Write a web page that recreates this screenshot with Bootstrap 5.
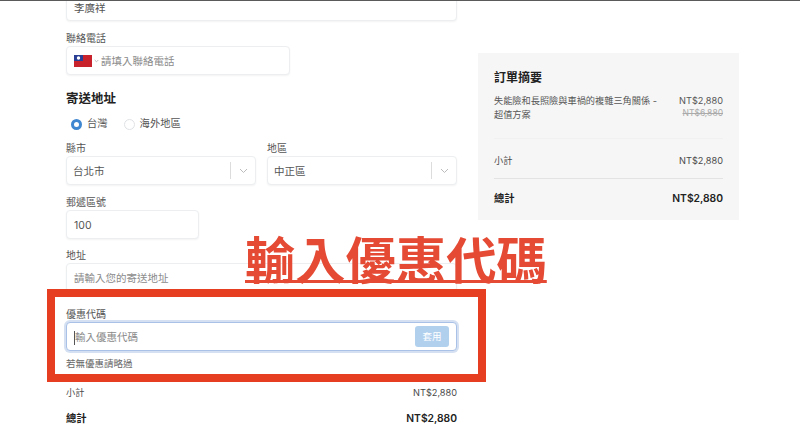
<!DOCTYPE html>
<html lang="zh-Hant">
<head>
<meta charset="utf-8">
<title>結帳</title>
<link href="https://cdn.jsdelivr.net/npm/bootstrap@5.3.0/dist/css/bootstrap.min.css" rel="stylesheet">
<style>
html,body{height:436px;overflow:hidden;background:#fff}
body{font-family:Inter,"Noto Sans CJK TC",sans-serif;font-size:11px;color:#4a4a4a;position:relative}
.topline{height:1px;background:#5a5a5a;position:relative;z-index:2}
.pagewrap{padding-left:66px;width:739px;align-items:flex-start;gap:21px}
.leftcol{width:391px;flex:none;margin-top:-9px}
.field{display:block;height:29px;line-height:30px;border:1px solid #eceef0;border-radius:4px;background:#fff;box-shadow:0 1px 2px rgba(0,0,0,.05);padding:0 7px;font-size:10.5px;color:#555}
.firstfield{line-height:31px}
.ph{color:#8b8b8b}
.nudge{margin-top:2px}
.lab{display:block;font-size:10px;line-height:14px;color:#555;margin:0 0 1px}
.phone{width:224px;gap:2px;display:flex;align-items:center}
.secthead{font-size:12.5px;font-weight:600;color:#222;line-height:18px;margin:15px 0 0}
.radios{height:22px;margin:5px 0 0 5px;gap:16px}
.radiodot{width:11px;height:11px;border-radius:50%;border:1px solid #dfe2e5;background:#fff;flex:none}
.radiodot.on{border:3px solid #3f87d0}
.radioitem{gap:5px;font-size:10.3px;color:#555}
.selbox{display:flex;align-items:center;justify-content:space-between;padding-right:0;padding-left:6px}
.selend{width:25px;height:17px;border-left:1px solid #dcdcdc;display:flex;align-items:center;justify-content:center}
.zip{width:133px}
.focusbox{border-color:#a9c1e6;box-shadow:0 0 0 2px #d5e1f2;display:flex;align-items:center;justify-content:space-between;padding:0 7px}
.caret{border-left:1px solid #555;height:14px;display:inline-block;vertical-align:middle}
.applybtn{background:#b1d0ee;color:#fff;font-size:9.5px;border:0;border-radius:3px;height:21px;width:34px;padding:0;line-height:21px}
.helptext{font-size:9.5px;color:#666;line-height:14px}
.rowline{display:flex;justify-content:space-between;align-items:center}
.sumline{font-size:9.2px;line-height:14px}
.strongline{font-weight:600;color:#222;font-size:10.3px;line-height:14px}
.panel{width:261px;flex:none;height:167px;margin-top:52px;background:#f6f6f6;padding:17px 16px 0}
.panel h2{font-size:12px;font-weight:600;color:#222;line-height:16px;margin:0 0 8px}
.itemtext{width:170px;font-size:9.2px;line-height:14px;color:#555}
.price{font-size:9.2px;line-height:13px;text-align:right;color:#555}
.oldprice{color:#aaa;text-decoration:line-through;font-size:8.5px}
.rule1{border-top:1px solid #f1f1f1;margin:16px 0 15px}
.rule2{border-top:1px solid #e3e3e3;margin:10px 0 12px}
.bigred{position:absolute;left:245px;top:228px;font-size:50.3px;line-height:58px;font-weight:700;color:#e54a35;text-decoration:underline;text-decoration-thickness:3px;text-underline-offset:1px;white-space:nowrap;font-family:"Noto Sans CJK TC",sans-serif}
.redbox{position:absolute;left:47px;top:289px;width:439px;height:93px;border:8px solid #e63e20;pointer-events:none}
</style>
</head>
<body>
<div class="topline"></div>
<div class="d-flex pagewrap">
  <div class="leftcol">
    <div class="field firstfield">李廣祥</div>

    <label class="lab" style="margin-top:10px">聯絡電話</label>
    <div class="field phone">
      <svg width="18" height="12" viewBox="0 0 18 12" aria-hidden="true"><rect width="18" height="12" fill="#c8232c"/><rect width="9" height="6" fill="#2a3f94"/><circle cx="4.5" cy="3" r="1.7" fill="#fff"/></svg>
      <svg width="5" height="4" viewBox="0 0 5 4" aria-hidden="true"><path d="M.7 1l1.8 1.8L4.3 1" fill="none" stroke="#aaa" stroke-width=".8"/></svg>
      <span class="ph nudge">請填入聯絡電話</span>
    </div>

    <div class="secthead">寄送地址</div>
    <div class="d-flex align-items-center radios">
      <div class="d-flex align-items-center radioitem"><span class="radiodot on"></span>台灣</div>
      <div class="d-flex align-items-center radioitem"><span class="radiodot"></span>海外地區</div>
    </div>

    <div class="d-flex" style="margin-top:6px;column-gap:11px">
      <div class="flex-fill" style="width:190px">
        <label class="lab">縣市</label>
        <div class="field selbox"><span class="nudge">台北市</span><span class="selend"><svg width="9" height="6" viewBox="0 0 9 6" aria-hidden="true"><path d="M1 1l3.5 3.5L8 1" fill="none" stroke="#bbb"/></svg></span></div>
      </div>
      <div class="flex-fill" style="width:190px">
        <label class="lab">地區</label>
        <div class="field selbox"><span class="nudge">中正區</span><span class="selend"><svg width="9" height="6" viewBox="0 0 9 6" aria-hidden="true"><path d="M1 1l3.5 3.5L8 1" fill="none" stroke="#bbb"/></svg></span></div>
      </div>
    </div>

    <label class="lab" style="margin-top:10px">郵遞區號</label>
    <div class="field zip">100</div>

    <label class="lab" style="margin-top:9px">地址</label>
    <div class="field"><span class="ph">請輸入您的寄送地址</span></div>

    <label class="lab" style="margin-top:15px">優惠代碼</label>
    <div class="field focusbox"><span class="ph nudge"><span class="caret"></span>輸入優惠代碼</span><button class="applybtn" type="button">套用</button></div>
    <div class="helptext" style="margin-top:6px">若無優惠請略過</div>

    <div class="rowline sumline" style="margin-top:15px"><span>小計</span><span>NT$2,880</span></div>
    <div class="rowline strongline" style="margin-top:11px"><span>總計</span><span>NT$2,880</span></div>
  </div>

  <aside class="panel">
    <h2>訂單摘要</h2>
    <div class="rowline align-items-start">
      <div class="itemtext">失能險和長照險與車禍的複雜三角關係 - 超值方案</div>
      <div class="price"><div>NT$2,880</div><div class="oldprice">NT$6,880</div></div>
    </div>
    <div class="rule1"></div>
    <div class="rowline sumline"><span>小計</span><span>NT$2,880</span></div>
    <div class="rule2"></div>
    <div class="rowline strongline"><span>總計</span><span>NT$2,880</span></div>
  </aside>
</div>

<div class="bigred">輸入優惠代碼</div>
<div class="redbox"></div>
<script src="https://cdn.jsdelivr.net/npm/bootstrap@5.3.0/dist/js/bootstrap.bundle.min.js"></script>
</body>
</html>
